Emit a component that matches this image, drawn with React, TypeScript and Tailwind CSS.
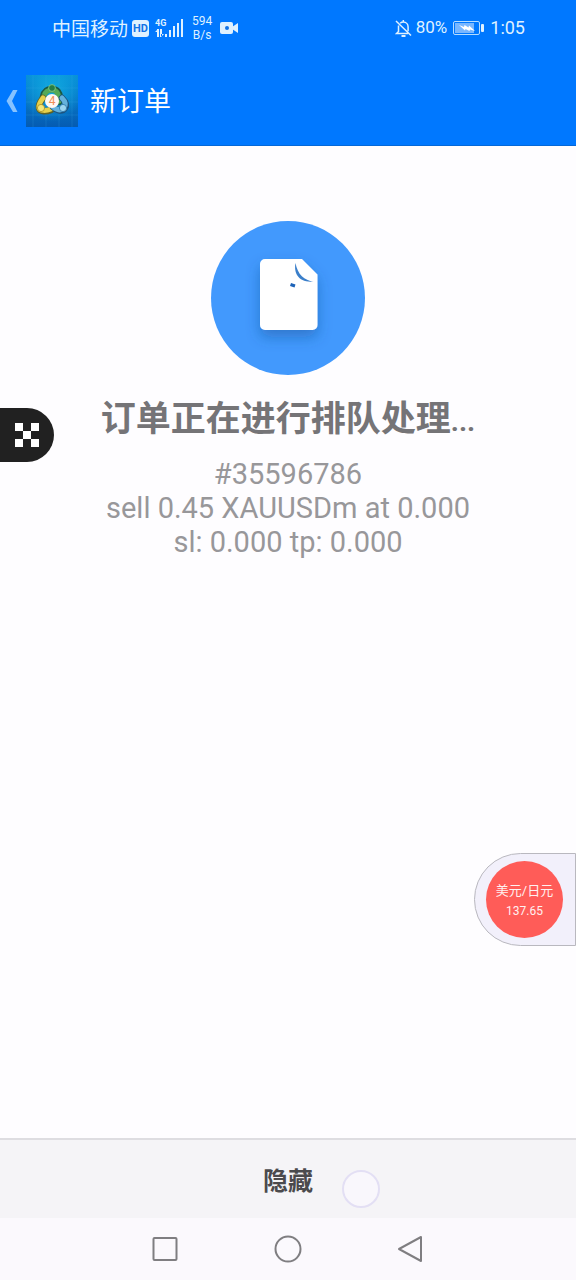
import type { ReactNode } from 'react';

// ---------- icons ----------

function HdIcon() {
  return (
    <span className="flex h-[17px] w-[17px] items-center justify-center rounded-[3px] bg-[#dff1ff] text-[11px] leading-none font-bold text-[#1273e6]">
      HD
    </span>
  );
}

function SignalIcon() {
  return (
    <svg width="29" height="20" viewBox="0 0 29 20" fill="#dff1ff" aria-hidden="true">
      <text x="0" y="8" fontSize="9" fontWeight="700" fontFamily="Roboto, sans-serif">4G</text>
      <path d="M2 11h2v8H2zM0 14l3-3v3zM5 11h2v8H5zM6 19l3-3H6z" />
      <rect x="10" y="16" width="2" height="3" />
      <rect x="14" y="12" width="2" height="7" />
      <rect x="18" y="8" width="2" height="11" />
      <rect x="22" y="5" width="2" height="14" />
      <rect x="26" y="1" width="2" height="18" />
    </svg>
  );
}

function VideoIcon() {
  return (
    <svg width="19" height="14" viewBox="0 0 19 14" aria-hidden="true">
      <rect x="0" y="1" width="13" height="12" rx="2" fill="#dff1ff" />
      <path d="M12 6l6-4v10l-6-4z" fill="#dff1ff" />
      <circle cx="7" cy="7" r="2" fill="#1273e6" />
    </svg>
  );
}

function BellOffIcon() {
  return (
    <svg width="17" height="19" viewBox="0 0 17 19" fill="none" stroke="#dff1ff" strokeWidth="1.5" aria-hidden="true">
      <path d="M3.500 6.500v6L1.500 14.500h11.500M5.200 4.200C6 3.500 7 3.100 8.300 3.100c2.800 0 4.800 2 4.800 4.800v4.300M8.300 1v2M1 2l15 14.500" />
      <path d="M6.500 17h4" strokeWidth="2" />
    </svg>
  );
}

function BatteryIcon() {
  return (
    <svg width="31" height="16" viewBox="0 0 31 16" aria-hidden="true">
      <rect x="0.500" y="1.500" width="26" height="13" rx="1.500" fill="none" stroke="#b5dcff" />
      <rect x="2" y="3" width="19" height="10" fill="#78b6ff" />
      <path d="M6 5l5 2 .5-2 4 2.500.5-2L22 11l-5-1.500-.5 1.500-4-2-.5 1.500z" fill="#fff" />
      <rect x="28" y="4" width="3" height="8" rx="1" fill="#dff1ff" />
    </svg>
  );
}

function AppLogo() {
  return (
    <svg width="52" height="52" viewBox="0 0 52 52" aria-hidden="true">
      <defs>
        <linearGradient id="tile" x1="0" y1="0" x2="0" y2="1">
          <stop offset="0" stopColor="#078fd8" />
          <stop offset="1" stopColor="#055bb2" />
        </linearGradient>
        <radialGradient id="glow" cx="0.5" cy="0.3" r="0.6">
          <stop offset="0" stopColor="#14b5e4" stopOpacity="0.8" />
          <stop offset="1" stopColor="#14b5e4" stopOpacity="0" />
        </radialGradient>
      </defs>
      <rect width="52" height="52" fill="url(#tile)" />
      <rect width="52" height="52" fill="url(#glow)" />
      <path d="M7 0v52M20 0v52M33 0v52M46 0v52M0 13h52M0 27h52M0 40h52" stroke="#3aa9e8" strokeOpacity="0.2" fill="none" />
      <g fill="none" strokeLinecap="round" strokeLinejoin="round">
        <path d="M17 22c1-6 4-8 9-8 5 0 8 4 8 9l-1 4" stroke="#1c5a44" strokeWidth="6.500" />
        <path d="M18 21c1-4 4-6 8-6 5 0 7 4 7 11" stroke="#54a957" strokeWidth="5" />
        <path d="M17 23c-3 4-5 7-4 10 1 4 7 4 12 2" stroke="#5f6225" strokeWidth="6.500" />
        <path d="M17 23c-3 4-5 7-4 10 1 3 7 3 12 1" stroke="#e5d04a" strokeWidth="5" />
        <path d="M36 23c4 4 5 7 3 10-3 4-8 3-12-1" stroke="#1d527d" strokeWidth="6.500" />
        <path d="M36 23c4 4 4 7 2 10-3 3-7 2-11-1" stroke="#64b2dc" strokeWidth="5" />
      </g>
      <circle cx="26" cy="13" r="3.400" fill="#267d46" stroke="#8bd08b" strokeWidth="0.800" />
      <circle cx="15" cy="33" r="3.600" fill="#f3e678" stroke="#a58d24" strokeWidth="0.800" />
      <circle cx="37" cy="33" r="3.600" fill="#9cd5f0" stroke="#2874a8" strokeWidth="0.800" />
      <circle cx="26" cy="26" r="7" fill="#fff8f2" />
      <text x="26" y="30" textAnchor="middle" fontSize="12" fontFamily="Roboto, sans-serif" fill="#f08f55">4</text>
    </svg>
  );
}

function OrderIcon() {
  return (
    <svg width="154" height="154" viewBox="0 0 154 154" aria-hidden="true">
      <defs>
        <filter id="pageShadow" x="-40%" y="-40%" width="180%" height="180%">
          <feDropShadow dx="0" dy="7" stdDeviation="7" floodColor="#1c4f94" floodOpacity="0.45" />
        </filter>
      </defs>
      <circle cx="77" cy="77" r="77" fill="#4299fd" />
      <path
        d="M54 38h37l15.500 15.500V104a5 5 0 0 1-5 5H54a5 5 0 0 1-5-5V43a5 5 0 0 1 5-5z"
        fill="#fff"
        filter="url(#pageShadow)"
      />
      <path d="M84.500 42c-2 10 3 20 18 18.500-9-1-16-7-18-18.500z" fill="#3b7fca" />
      <path d="M80 62l4.500 1.500-1 3-4.500-1.500z" fill="#1d63b8" />
    </svg>
  );
}

// ---------- page parts ----------

function StatusBar() {
  return (
    <div className="flex h-14 items-center justify-between pr-[51px] pl-[52px] text-[#dff1ff]">
      <div className="flex items-center">
        <span className="mr-1 pt-1 text-[19px] leading-6">中国移动</span>
        <HdIcon />
        <span className="ml-1.5"><SignalIcon /></span>
        <span className="mx-2 text-center text-xs leading-[14px]">
          594
          <br />
          B/s
        </span>
        <VideoIcon />
      </div>
      <div className="flex items-center">
        <BellOffIcon />
        <span className="mr-1.5 ml-1 text-[17px]">80%</span>
        <BatteryIcon />
        <span className="ml-1.5 text-lg">1:05</span>
      </div>
    </div>
  );
}

function TitleBar() {
  return (
    <div className="flex h-[89px] items-center pl-1.5">
      <button type="button" className="flex items-center" aria-label="返回">
        <svg width="12" height="24" viewBox="0 0 12 24" aria-hidden="true">
          <path d="M7 1h4.500L6 12l5.500 11H7L0.500 12z" fill="#86c2ff" />
        </svg>
        <span className="ml-2"><AppLogo /></span>
      </button>
      <h1 className="ml-3 pt-1 text-[27px] text-white">新订单</h1>
    </div>
  );
}

function NavButton({ label, children }: { label: string; children: ReactNode }) {
  return (
    <button type="button" aria-label={label} className="flex w-[123px] items-center justify-center">
      <svg width="28" height="28" viewBox="0 0 28 28" fill="none" stroke="#7f7e81" strokeWidth="2" strokeLinejoin="round" aria-hidden="true">
        {children}
      </svg>
    </button>
  );
}

export default function App() {
  return (
    <div className="relative flex min-h-screen flex-col bg-[#fefdff] font-[Roboto,'Noto_Sans_CJK_SC',sans-serif]">
      <header className="border-b border-[#0568d8] bg-[#0078ff]">
        <StatusBar />
        <TitleBar />
      </header>

      <main className="flex flex-1 flex-col items-center pt-[75px] text-center">
        <OrderIcon />
        <h2 className="mt-5 text-[35px] leading-[50px] font-bold text-[#757477]">
          订单正在进行排队处理<span className="text-[28px]">...</span>
        </h2>
        <p className="mt-2.5 text-[29px] leading-[34px] text-[#98979a]">
          #35596786
          <br />
          sell 0.45 XAUUSDm at 0.000
          <br />
          sl: 0.000 tp: 0.000
        </p>
      </main>

      <footer>
        <button
          type="button"
          className="flex h-20 w-full items-center justify-center border-t-2 border-[#dedde1] bg-[#f5f4f7] pt-1.5 text-[25px] font-bold text-[#4b4a4d]"
        >
          隐藏
        </button>
        <nav className="flex h-[62px] items-center justify-center bg-[#fbf9fd]">
          <NavButton label="最近任务">
            <rect x="2.500" y="3" width="23" height="22" rx="1" />
          </NavButton>
          <NavButton label="主屏幕">
            <circle cx="14" cy="14" r="12.500" />
          </NavButton>
          <NavButton label="后退">
            <path d="M24 2v24L2 14z" />
          </NavButton>
        </nav>
      </footer>

      {/* floating tools on the screen edges */}
      <button
        type="button"
        aria-label="工具"
        className="absolute top-[408px] left-0 flex h-[54px] w-[54px] items-center justify-center rounded-r-full bg-[#212121]"
      >
        <svg width="24" height="24" viewBox="0 0 24 24" fill="#fff" aria-hidden="true">
          <path d="M0 0h8v8H0zM16 0h8v8h-8zM8 8h8v8H8zM0 16h8v8H0zM16 16h8v8h-8z" />
        </svg>
      </button>

      <button
        type="button"
        className="absolute top-[853px] right-0 flex h-[93px] w-[102px] items-center rounded-l-full border border-[#b9b8bf] bg-[#f2f0fb] pl-[11px]"
      >
        <span className="flex h-[77px] w-[77px] flex-col items-center justify-center rounded-full bg-[#ff5c58] pt-0.5 text-[12px] leading-[20px] text-[#fff0f0]">
          <span className="whitespace-nowrap text-[13px]">美元/日元</span>
          <span>137.65</span>
        </span>
      </button>

      {/* touch marker */}
      <div className="pointer-events-none absolute right-[196px] bottom-[72px] h-[38px] w-[38px] rounded-full border-2 border-[#e3dff4] bg-[#f9f7fc]" />
    </div>
  );
}
